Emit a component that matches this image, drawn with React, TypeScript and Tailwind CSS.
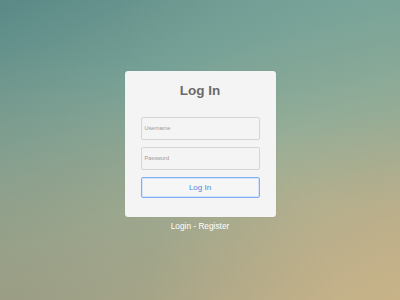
export default function App() {
  return (
    <div
      className="relative h-[300px] w-full overflow-hidden flex flex-col items-center pt-[71px] bg-[linear-gradient(155deg,#5a8986_0%,#77a196_30%,#9caf96_55%,#b3ad8c_80%,#c6b288_100%)]"
      style={{ fontFamily: '"Liberation Sans", Arial, sans-serif' }}
    >
      <div className="pointer-events-none absolute inset-0 bg-[radial-gradient(ellipse_at_0%_100%,rgba(152,152,128,0.75)_0%,rgba(152,152,128,0)_60%)]" />
      <div className="pointer-events-none absolute inset-0 bg-[radial-gradient(ellipse_at_100%_0%,rgba(116,163,154,0.6)_0%,rgba(116,163,154,0)_50%)]" />
      <div className="pointer-events-none absolute inset-0 bg-[radial-gradient(ellipse_at_100%_100%,rgba(200,178,136,0.6)_0%,rgba(200,178,136,0)_45%)]" />
      <div className="relative w-[151px] h-[146px] rounded-[3px] bg-[#f4f4f4] shadow-[0_0_1px_rgba(0,0,0,0.15)] px-[16px] pt-[10px] flex flex-col">
        <div className="text-center text-[13.5px] leading-[20px] font-bold text-[#6a6a6a]">Log In</div>
        <div className="mt-[16px] h-[23px] w-full rounded-[2px] border border-[#d6d6d6] bg-[#f4f4f4] flex items-center pl-[3px]">
          <span className="text-[5.6px] text-[#9a9a9a]">Username</span>
        </div>
        <div className="mt-[7px] h-[23px] w-full rounded-[2px] border border-[#d6d6d6] bg-[#f4f4f4] flex items-center pl-[3px]">
          <span className="text-[5.6px] text-[#9a9a9a]">Password</span>
        </div>
        <div className="mt-[7px] h-[21px] w-full rounded-[2px] border border-[#7fb0f5] shadow-[inset_0_0_0_1px_#d4e4fa] bg-[#f6f6f6] flex items-center justify-center">
          <span className="text-[8px] text-[#4f87dc]">Log In</span>
        </div>
      </div>
      <div className="relative mt-[2px] text-[8.3px] leading-[14px] text-white">Login - Register</div>
    </div>
  );
}
